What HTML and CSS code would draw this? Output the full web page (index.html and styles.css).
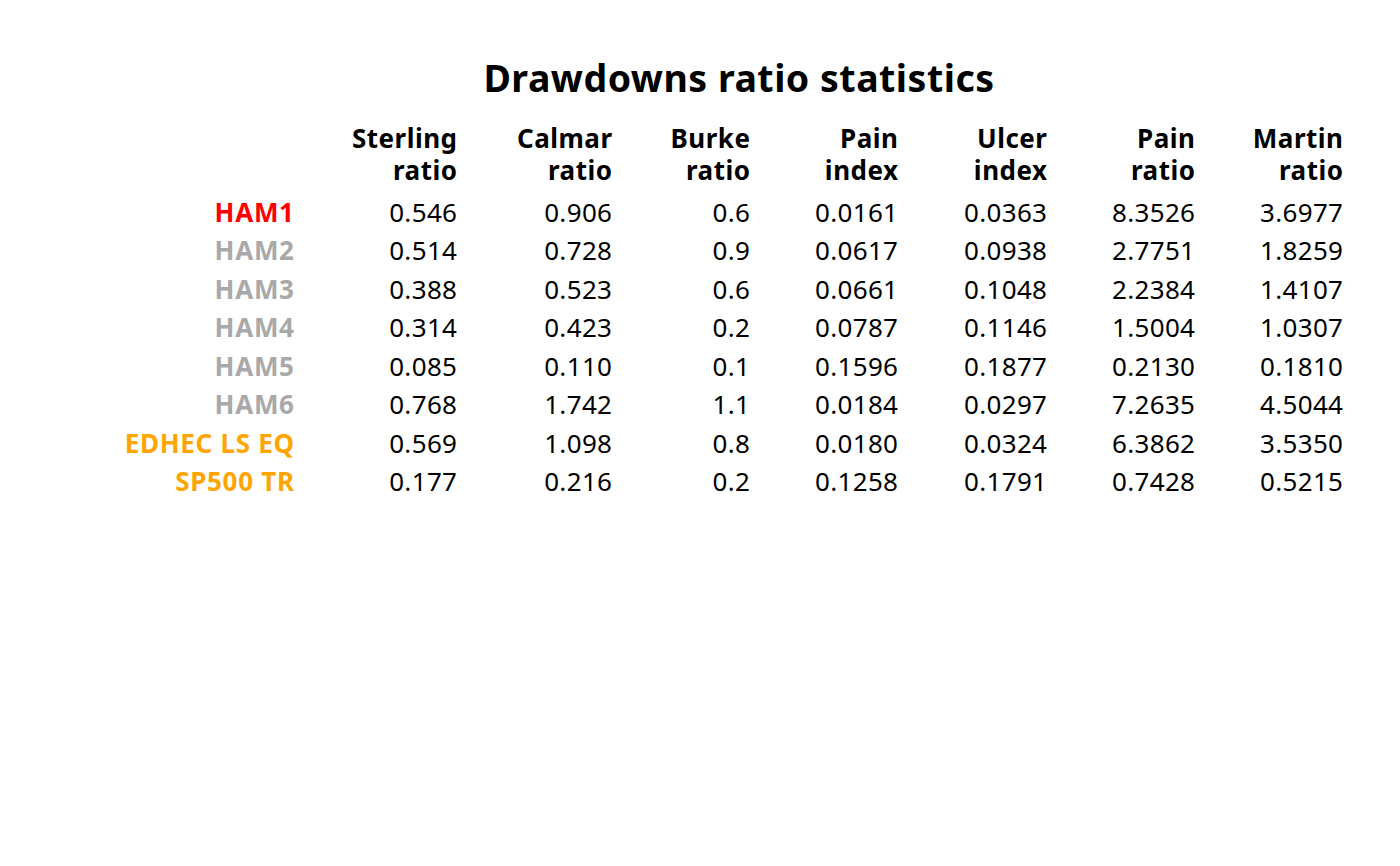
FILE: index.html
```html
<!DOCTYPE html>
<html>
<head>
<meta charset="utf-8">
<link rel="stylesheet" href="styles.css">
</head>
<body>
<div class="plot">
  <h1 class="title">Drawdowns ratio statistics</h1>
  <div class="table">
    <div class="head"></div>
    <div class="head c1">Sterling<br>ratio</div>
    <div class="head c2">Calmar<br>ratio</div>
    <div class="head c3">Burke<br>ratio</div>
    <div class="head c4">Pain<br>index</div>
    <div class="head c5">Ulcer<br>index</div>
    <div class="head c6">Pain<br>ratio</div>
    <div class="head c7">Martin<br>ratio</div>

    <div class="lab red">HAM1</div><div class="num">0.546</div><div class="num">0.906</div><div class="num">0.6</div><div class="num">0.0161</div><div class="num">0.0363</div><div class="num">8.3526</div><div class="num">3.6977</div>
    <div class="lab gray">HAM2</div><div class="num">0.514</div><div class="num">0.728</div><div class="num">0.9</div><div class="num">0.0617</div><div class="num">0.0938</div><div class="num">2.7751</div><div class="num">1.8259</div>
    <div class="lab gray">HAM3</div><div class="num">0.388</div><div class="num">0.523</div><div class="num">0.6</div><div class="num">0.0661</div><div class="num">0.1048</div><div class="num">2.2384</div><div class="num">1.4107</div>
    <div class="lab gray">HAM4</div><div class="num">0.314</div><div class="num">0.423</div><div class="num">0.2</div><div class="num">0.0787</div><div class="num">0.1146</div><div class="num">1.5004</div><div class="num">1.0307</div>
    <div class="lab gray">HAM5</div><div class="num">0.085</div><div class="num">0.110</div><div class="num">0.1</div><div class="num">0.1596</div><div class="num">0.1877</div><div class="num">0.2130</div><div class="num">0.1810</div>
    <div class="lab gray">HAM6</div><div class="num">0.768</div><div class="num">1.742</div><div class="num">1.1</div><div class="num">0.0184</div><div class="num">0.0297</div><div class="num">7.2635</div><div class="num">4.5044</div>
    <div class="lab orange">EDHEC LS EQ</div><div class="num">0.569</div><div class="num">1.098</div><div class="num">0.8</div><div class="num">0.0180</div><div class="num">0.0324</div><div class="num">6.3862</div><div class="num">3.5350</div>
    <div class="lab orange">SP500 TR</div><div class="num">0.177</div><div class="num">0.216</div><div class="num">0.2</div><div class="num">0.1258</div><div class="num">0.1791</div><div class="num">0.7428</div><div class="num">0.5215</div>
  </div>
</div>
</body>
</html>
```

FILE: styles.css
```css
html, body {
  margin: 0;
  padding: 0;
  background: #ffffff;
}
body {
  width: 1400px;
  height: 866px;
  overflow: hidden;
  font-family: "Noto Sans", "Open Sans", sans-serif;
  color: #000000;
}
.plot {
  display: flex;
  flex-direction: column;
}
.title {
  margin: 52px 0 0 0;
  padding-left: 78px;
  font-size: 37.5px;
  font-weight: 700;
  letter-spacing: 0.5px;
  line-height: 1.362;
  text-align: center;
}
.table {
  display: grid;
  grid-template-columns: 294px 163px 155px 138px 148px 149px 148px 148px;
  margin-top: 19px;
  font-size: 26px;
}
.head {
  font-weight: 700;
  line-height: 32px;
  letter-spacing: 0.5px;
  margin-right: -0.5px;
  text-align: right;
  margin-bottom: 6.5px;
}
.lab {
  font-weight: 700;
  text-align: right;
  line-height: 38.5px;
  letter-spacing: 0.7px;
  margin-right: -0.7px;
  white-space: nowrap;
}
.num {
  text-align: right;
  line-height: 38.5px;
  letter-spacing: 0.35px;
  margin-right: -0.35px;
}
.red { color: #ff0000; }
.gray { color: #a9a9a9; }
.orange { color: #ffa500; }
```
